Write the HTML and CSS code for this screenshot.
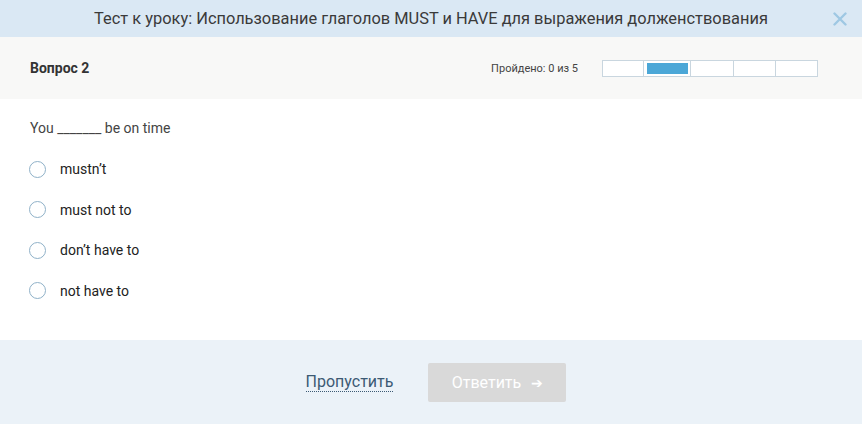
FILE: index.html
```html
<!DOCTYPE html>
<html lang="ru">
<head>
    <meta charset="UTF-8">
    <title>Тест к уроку</title>
    <link rel="stylesheet" href="styles.css">
</head>
<body>
    <div class="modal">
        <div class="modal-header">
            <h1>Тест к уроку: Использование глаголов MUST и HAVE для выражения долженствования</h1>
            <svg class="close" width="14" height="14" viewBox="0 0 14 14">
                <path d="M1.5 1.5 L12.5 12.5 M12.5 1.5 L1.5 12.5" stroke="#9fc8e3" stroke-width="2.4" stroke-linecap="round"/>
            </svg>
        </div>
        <div class="question-bar">
            <div class="question-num">Вопрос 2</div>
            <div class="progress-info">
                <span class="progress-text">Пройдено: 0 из 5</span>
                <div class="progress">
                    <div class="seg"></div>
                    <div class="seg active"></div>
                    <div class="seg"></div>
                    <div class="seg"></div>
                    <div class="seg"></div>
                </div>
            </div>
        </div>
        <div class="question-body">
            <p class="question">You _______ be on time</p>
            <label class="option"><span class="radio"></span>mustn’t</label>
            <label class="option"><span class="radio"></span>must not to</label>
            <label class="option"><span class="radio"></span>don’t have to</label>
            <label class="option"><span class="radio"></span>not have to</label>
        </div>
        <div class="modal-footer">
            <a class="skip" href="#">Пропустить</a>
            <button class="answer" disabled>Ответить <span class="arrow">&#x2794;</span></button>
        </div>
    </div>
</body>
</html>
```

FILE: styles.css
```css
body {
    margin: 0;
    font-family: 'Roboto', 'Liberation Sans', sans-serif;
    color: #333;
    background: #fff;
}
.modal {
    width: 862px;
    height: 424px;
    display: flex;
    flex-direction: column;
}
.modal-header {
    height: 37px;
    background: #dae8f4;
    display: flex;
    align-items: center;
    justify-content: center;
    position: relative;
}
.modal-header h1 {
    margin: 0;
    font-size: 16.4px;
    font-weight: normal;
    color: #3a3a3a;
}
.close {
    position: absolute;
    right: 15px;
    top: 12px;
}
.question-bar {
    height: 62px;
    background: #f8f8f7;
    display: flex;
    align-items: center;
    justify-content: space-between;
    padding: 0 44px 0 30px;
}
.question-num {
    font-size: 14px;
    font-weight: bold;
    color: #333;
}
.progress-info {
    display: flex;
    align-items: center;
    gap: 24px;
}
.progress-text {
    font-size: 11px;
    color: #444;
}
.progress {
    display: flex;
    width: 216px;
    height: 17px;
    border: 1px solid #c9d6df;
    background: #fff;
    box-sizing: border-box;
}
.seg {
    flex: 1;
    border-left: 1px solid #c9d6df;
}
.seg:first-child {
    border-left: none;
}
.seg.active {
    background: #4ba7d7;
    border: 2px solid #fff;
    border-left-width: 3px;
    outline: 1px solid #c9d6df;
}
.question-body {
    height: 241px;
    padding: 21px 30px 0;
    box-sizing: border-box;
}
.question {
    margin: 0 0 13px;
    font-size: 14px;
    color: #444;
}
.option {
    display: flex;
    align-items: center;
    gap: 14px;
    height: 40.5px;
    font-size: 14px;
    color: #222;
    margin-left: -1px;
}
.radio {
    width: 15px;
    height: 15px;
    border: 1px solid #8fb1c8;
    border-radius: 50%;
    background: #fff;
}
.modal-footer {
    flex: 1;
    background: #ebf2f8;
    display: flex;
    align-items: center;
    justify-content: center;
    gap: 35px;
}
.skip {
    font-size: 16px;
    color: #3c5a74;
    text-decoration: none;
    border-bottom: 1px dotted #3c5a74;
    line-height: 18px;
    margin-left: 10px;
}
.answer {
    width: 138px;
    height: 39px;
    border: none;
    border-radius: 2px;
    background: #d9d9d9;
    color: #fff;
    font-family: inherit;
    font-size: 16px;
    margin-top: 1px;
}
.arrow {
    margin-left: 6px;
    font-size: 14px;
}
```
